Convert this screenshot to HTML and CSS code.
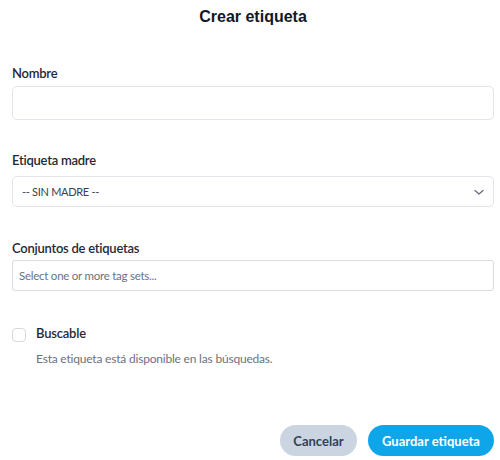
FILE: index.html
```html
<!DOCTYPE html>
<html lang="es">
<head>
<meta charset="utf-8">
<link rel="stylesheet" href="styles.css">
</head>
<body>
<div class="modal">
  <h1 class="title">Crear etiqueta</h1>
  <div class="field f-name">
    <label class="label label-name">Nombre</label>
    <div class="input input-name"></div>
  </div>
  <div class="field f-parent">
    <label class="label label-parent">Etiqueta madre</label>
    <div class="input select">
      <span class="select-text">-- SIN MADRE --</span>
      <svg class="chev" width="12" height="8" viewBox="0 0 12 8"><path d="M2 2.5 L6 6 L10 2.5" fill="none" stroke="#6b7280" stroke-width="1.4" stroke-linecap="round" stroke-linejoin="round"/></svg>
    </div>
  </div>
  <div class="field f-sets">
    <label class="label label-sets">Conjuntos de etiquetas</label>
    <div class="input tags">
      <span class="placeholder">Select one or more tag sets...</span>
    </div>
  </div>
  <div class="check-row">
    <span class="checkbox"></span>
    <div class="check-text">
      <div class="check-label">Buscable</div>
      <div class="check-desc">Esta etiqueta está disponible en las búsquedas.</div>
    </div>
  </div>
  <div class="actions">
    <button class="btn btn-cancel">Cancelar</button>
    <button class="btn btn-save">Guardar etiqueta</button>
  </div>
</div>
</body>
</html>
```
FILE: styles.css
```css
* { box-sizing: border-box; }
html, body { margin: 0; padding: 0; background: #ffffff; }
body { width: 500px; height: 460px; overflow: hidden; font-family: "Lato", "Noto Sans", sans-serif; color: #1f2937; }
.modal { padding: 0 6px 0 12px; display: flex; flex-direction: column; }
.title { margin: 0; padding-top: 7px; height: 62px; text-align: center; font-family: "Liberation Sans", Arial, sans-serif; font-size: 16px; font-weight: bold; color: #111827; line-height: 20px; }
.label { display: block; font-size: 13px; font-weight: 600; letter-spacing: -0.25px; color: #1f2937; line-height: 18px; height: 24px; padding-top: 2px; }
.label-parent { height: 27px; }
.label-sets { height: 23px; }
.input { border: 1px solid #e2e4ea; border-radius: 5px; background: #fff; width: 482px; }
.input-name { height: 34px; }
.f-name { margin-bottom: 29px; }
.select { height: 31px; display: flex; align-items: center; justify-content: space-between; padding: 0 8px 0 9px; }
.select-text { font-size: 11px; letter-spacing: -0.3px; color: #374151; }
.f-parent { margin-bottom: 30px; }
.tags { height: 31px; display: flex; align-items: center; padding: 0 6px; border-color: #d9dce2; border-radius: 3px; }
.placeholder { font-size: 11.5px; letter-spacing: -0.25px; color: #6b7280; }
.check-row { display: flex; margin-top: 33px; }
.checkbox { width: 14px; height: 14px; border: 1px solid #d6d9df; border-radius: 4px; margin-top: 4px; margin-right: 10px; flex-shrink: 0; }
.check-label { font-size: 13px; font-weight: 600; letter-spacing: -0.2px; color: #1f2937; line-height: 18px; }
.check-desc { font-size: 12px; letter-spacing: -0.2px; color: #6b7280; margin-top: 9px; line-height: 16px; }
.actions { display: flex; justify-content: flex-end; gap: 11px; margin-top: 58px; }
.btn { border: none; border-radius: 16px; height: 31px; font-family: "Lato", "Noto Sans", sans-serif; font-size: 13px; font-weight: 700; padding: 0; }
.btn-cancel { background: #cbd5e1; color: #334155; width: 77px; }
.btn-save { background: #0ea5e9; color: #fff; width: 126px; }
```
